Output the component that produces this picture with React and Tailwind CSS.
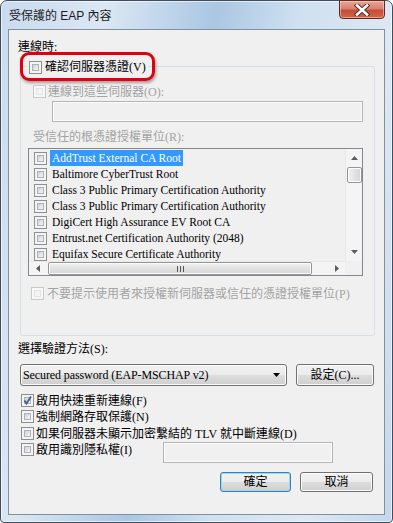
import React from "react";

const certs = [
  "AddTrust External CA Root",
  "Baltimore CyberTrust Root",
  "Class 3 Public Primary Certification Authority",
  "Class 3 Public Primary Certification Authority",
  "DigiCert High Assurance EV Root CA",
  "Entrust.net Certification Authority (2048)",
  "Equifax Secure Certificate Authority",
];

function CheckBox({ checked, disabled }) {
  if (disabled) {
    return (
      <span className="relative block w-[13px] h-[13px] shrink-0 border border-[#c9c9c9] bg-[#f7f7f7]">
        <span className="absolute inset-[2px] border border-[#e3e3e3] bg-[#f4f4f4]" />
      </span>
    );
  }
  return (
    <span className="relative block w-[13px] h-[13px] shrink-0 border border-[#8e8f8f] bg-[#f4f4f4]">
      <span className="absolute inset-[2px] border border-[#aeb3b9] bg-[linear-gradient(135deg,#cbcfd5,#f7f7f7)]" />
      {checked && (
        <svg className="absolute inset-0" width="11" height="11" viewBox="0 0 11 11">
          <path d="M2.5 5.5 L4.5 8.5 L9 1.5" fill="none" stroke="#4a5d8c" strokeWidth="1.8" />
        </svg>
      )}
    </span>
  );
}

function Button({ children, primary, className }) {
  return (
    <div
      className={`${className} h-[20px] rounded-[3px] border ${
        primary ? "border-[#3c7fb1] shadow-[inset_0_0_0_1px_#9ed4f4]" : "border-[#707070] shadow-[inset_0_0_0_1px_#fcfcfc]"
      } bg-[linear-gradient(#f2f2f2_0%,#ebebeb_50%,#dddddd_51%,#cfcfcf_100%)] flex items-center justify-center text-black`}
    >
      {children}
    </div>
  );
}

export default function App() {
  return (
    <div className="w-[393px] h-[523px] flex flex-col rounded-t-[7px] rounded-b-[4px] border border-[#3e4d60] bg-[linear-gradient(100deg,#c9dbee_0%,#dbe7f3_22%,#aac7e3_45%,#cfe0f0_62%,#dde8f3_82%,#c3d7ec_100%)] shadow-[inset_0_0_0_1px_rgba(255,255,255,0.6)] px-[7px] pb-[7px] font-['Liberation_Serif','Noto_Sans_CJK_TC',serif] text-[12px] leading-[14px] text-black">
      {/* title bar */}
      <div className="h-[28px] flex items-start justify-between">
        <span className="mt-[8px] ml-[1px] font-['Liberation_Sans','Noto_Sans_CJK_TC',sans-serif] text-[12px] leading-[14px] text-[#1b1b1b]">
          受保護的 EAP 內容
        </span>
        <div className="-mt-[1px] w-[46px] h-[19px] rounded-b-[4px] border border-[#5b2b27] bg-[linear-gradient(#e8a796_0%,#d7826f_45%,#c74c36_55%,#d2664a_100%)] shadow-[inset_0_0_0_1px_rgba(255,220,210,0.5)] flex items-center justify-center">
          <svg width="16" height="12" viewBox="0 0 16 12">
            <path d="M3 1.5 L13 10.5 M13 1.5 L3 10.5" stroke="#4a2a26" strokeWidth="4.4" strokeLinecap="square" />
            <path d="M3 1.5 L13 10.5 M13 1.5 L3 10.5" stroke="#ffffff" strokeWidth="2.6" strokeLinecap="square" />
          </svg>
        </div>
      </div>

      {/* client area */}
      <div className="flex-1 flex flex-col border border-[#828f9d] bg-[#f0f0f0]">
        <div className="mt-[10px] ml-[9px]">連線時:</div>

        {/* group box */}
        <div className="relative mt-[12px] ml-[11px] w-[355px] h-[270px] rounded-[3px] border border-[#d5dfe5] flex flex-col">
          <div className="absolute -left-[1px] -top-[15px] w-[135px] h-[29px] rounded-[9px] border-[3px] border-[#e0000e] shadow-[1px_2px_3px_rgba(0,0,0,0.35)]" />
          <div className="-mt-[7px] ml-[6px] self-start px-[2px] bg-[#f0f0f0] h-[14px] flex items-center gap-[3px]">
            <CheckBox />
            <span>確認伺服器憑證(V)</span>
          </div>

          <div className="mt-[11px] ml-[12px] h-[13px] flex items-center gap-[2px] text-[#a3a3a3]">
            <CheckBox disabled />
            <span>連線到這些伺服器(O):</span>
          </div>
          <div className="mt-[3px] ml-[31px] w-[311px] h-[21px] border border-[#b5b5b5] shadow-[inset_0_0_0_1px_#fbfbfb] bg-[#f0f0f0]" />

          <div className="mt-[8px] ml-[12px] text-[#a3a3a3]">受信任的根憑證授權單位(R):</div>

          {/* list */}
          <div className="mt-[4px] ml-[7px] w-[335px] h-[128px] border border-[#828790] flex flex-col">
            <div className="h-[112px] flex">
              <div className="flex-1 overflow-hidden pt-[1px] text-[11.5px]">
                {certs.map((c, i) => (
                  <div key={i} className="h-[16px] pl-[5px] flex items-center whitespace-nowrap">
                    <CheckBox />
                    <span
                      className={`ml-[3px] px-[2px] h-[16px] flex items-center ${
                        i === 0 ? "bg-[#3399ff] text-white" : ""
                      }`}
                    >
                      {c}
                    </span>
                  </div>
                ))}
              </div>
              <div className="w-[17px] bg-[#f4f4f4] border-l border-[#e9e9e9] flex flex-col items-center">
                <svg className="mt-[7px]" width="7" height="4" viewBox="0 0 7 4">
                  <path d="M0 4 L3.5 0 L7 4 Z" fill="#5d5d5d" />
                </svg>
                <div className="mt-[7px] w-[15px] h-[16px] rounded-[2px] border border-[#959595] bg-[linear-gradient(90deg,#f3f3f3,#e2e2e2_50%,#d6d6d6)] shadow-[inset_0_0_0_1px_#fbfbfb]" />
                <div className="flex-1" />
                <svg className="mb-[7px]" width="7" height="4" viewBox="0 0 7 4">
                  <path d="M0 0 L7 0 L3.5 4 Z" fill="#5d5d5d" />
                </svg>
              </div>
            </div>
            <div className="flex-1 flex">
              <div className="flex-1 bg-[#f4f4f4] border-t border-[#e9e9e9] flex items-center">
                <svg className="ml-[7px]" width="4" height="7" viewBox="0 0 4 7">
                  <path d="M4 0 L0 3.5 L4 7 Z" fill="#5d5d5d" />
                </svg>
                <div className="ml-[8px] w-[264px] h-[13px] rounded-[2px] border border-[#959595] bg-[linear-gradient(#f3f3f3,#e2e2e2_50%,#d6d6d6)] shadow-[inset_0_0_0_1px_#fbfbfb] flex items-center justify-center">
                  <svg width="7" height="6" viewBox="0 0 7 6">
                    <path d="M0.5 0 V6 M3.5 0 V6 M6.5 0 V6" stroke="#555555" strokeWidth="1" />
                  </svg>
                </div>
                <div className="flex-1" />
                <svg className="mr-[6px]" width="4" height="7" viewBox="0 0 4 7">
                  <path d="M0 0 L4 3.5 L0 7 Z" fill="#5d5d5d" />
                </svg>
              </div>
              <div className="w-[17px] bg-[#f0f0f0]" />
            </div>
          </div>

          <div className="mt-[11px] ml-[10px] h-[13px] flex items-center gap-[3px] text-[#a3a3a3]">
            <CheckBox disabled />
            <span>不要提示使用者來授權新伺服器或信任的憑證授權單位(P)</span>
          </div>
        </div>

        <div className="mt-[6px] ml-[9px]">選擇驗證方法(S):</div>

        <div className="mt-[8px] ml-[11px] flex">
          <div className="w-[267px] h-[22px] rounded-[3px] border border-[#707070] shadow-[inset_0_0_0_1px_#fcfcfc] bg-[linear-gradient(#f2f2f2_0%,#ebebeb_50%,#dddddd_51%,#cfcfcf_100%)] flex items-center pl-[2px] pr-[6px]">
            <span className="flex-1 text-[12px] tracking-[-0.1px]">Secured password (EAP-MSCHAP v2)</span>
            <svg width="7" height="4" viewBox="0 0 7 4">
              <path d="M0 0 L7 0 L3.5 4 Z" fill="#000000" />
            </svg>
          </div>
          <Button className="ml-[9px] w-[78px] h-[22px]">設定(C)...</Button>
        </div>

        <div className="mt-[8px] ml-[12px] h-[13px] flex items-center gap-[2px]">
          <CheckBox checked />
          <span>啟用快速重新連線(F)</span>
        </div>
        <div className="mt-[3px] ml-[12px] h-[13px] flex items-center gap-[2px]">
          <CheckBox />
          <span>強制網路存取保護(N)</span>
        </div>
        <div className="mt-[4px] ml-[12px] h-[13px] flex items-center gap-[2px]">
          <CheckBox />
          <span>如果伺服器未顯示加密繫結的 TLV 就中斷連線(D)</span>
        </div>
        <div className="mt-[3px] ml-[12px] flex items-start">
          <div className="w-[142px] h-[13px] flex items-center gap-[2px]">
            <CheckBox />
            <span>啟用識別隱私權(I)</span>
          </div>
          <div className="-mt-[1px] w-[170px] h-[21px] border border-[#b5b5b5] shadow-[inset_0_0_0_1px_#fbfbfb] bg-[#f0f0f0]" />
        </div>

        <div className="mt-[9px] mr-[11px] flex justify-end gap-[9px]">
          <Button primary className="w-[71px]">確定</Button>
          <Button className="w-[73px]">取消</Button>
        </div>
      </div>
    </div>
  );
}
